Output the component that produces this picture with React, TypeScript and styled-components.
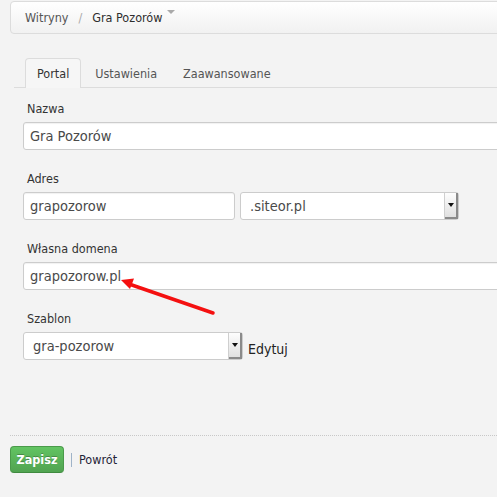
import React from "react";
import styled, { createGlobalStyle } from "styled-components";

const GlobalStyle = createGlobalStyle`
  html, body {
    margin: 0;
    padding: 0;
    background: #f3f3f3;
    overflow: hidden;
  }
  body {
    font-family: "DejaVu Sans Condensed", "DejaVu Sans", sans-serif;
    font-stretch: condensed;
  }
`;

const Page = styled.div`
  position: relative;
  width: 100%;
  height: 100vh;
  overflow: hidden;
  padding: 1px 0 0 10px;
  box-sizing: border-box;
`;

const Breadcrumb = styled.nav`
  display: flex;
  align-items: center;
  height: 33px;
  box-sizing: border-box;
  margin-right: -12px;
  padding-left: 14px;
  border: 1px solid #dcdcdc;
  border-radius: 4px;
  background: linear-gradient(#ffffff, #f1f1f1);
  font-size: 12.5px;
`;

const Crumb = styled.span<{ $current?: boolean }>`
  color: ${(p) => (p.$current ? "#2e2e2e" : "#555")};
`;

const Divider = styled.span`
  color: #aaa;
  margin: 0 10px;
`;

const Caret = styled.span`
  align-self: flex-start;
  margin: 8px 0 0 5px;
  width: 0;
  height: 0;
  border-top: 4px solid #aaa;
  border-left: 4px solid transparent;
  border-right: 4px solid transparent;
`;

const Main = styled.div`
  margin: 24px 0 0 4px;
`;

const Tabs = styled.ul`
  display: flex;
  list-style: none;
  margin: 0;
  padding: 0 0 0 11px;
  border-bottom: 1px solid #dcdcdc;
  height: 30px;
  box-sizing: border-box;
`;

const Tab = styled.li<{ $active?: boolean }>`
  padding: 0 11px;
  margin-right: 2px;
  line-height: 29px;
  height: 30px;
  box-sizing: border-box;
  font-size: 12.5px;
  border: 1px solid ${(p) => (p.$active ? "#dcdcdc" : "transparent")};
  border-bottom: none;
  border-radius: 4px 4px 0 0;
  background: ${(p) => (p.$active ? "#f6f6f6" : "transparent")};
  color: ${(p) => (p.$active ? "#333" : "#555")};
`;

const Fields = styled.div`
  padding: 12px 0 0 9px;
`;

const Group = styled.div`
  margin-bottom: 20px;
`;

const Label = styled.label`
  display: block;
  padding-left: 4px;
  margin-bottom: 4px;
  line-height: 18px;
  font-size: 12.5px;
  color: #333;
`;

const Row = styled.div`
  display: flex;
  align-items: center;
  gap: 5px;
`;

const Input = styled.div<{ $width: number }>`
  flex: none;
  width: ${(p) => p.$width}px;
  height: 28px;
  box-sizing: border-box;
  padding: 0 6px;
  display: flex;
  align-items: center;
  background: #fff;
  border: 1px solid #ccc;
  border-radius: 3px;
  box-shadow: inset 0 1px 1px rgba(0, 0, 0, 0.06);
  font-size: 14.5px;
  color: #4a4a4a;
`;

const Select = styled.div<{ $width: number }>`
  flex: none;
  width: ${(p) => p.$width}px;
  height: 28px;
  box-sizing: border-box;
  display: flex;
  align-items: stretch;
  background: #fff;
  border: 1px solid #ccc;
  border-radius: 3px;
  font-size: 14.5px;
  color: #4a4a4a;
`;

const SelectValue = styled.span`
  flex: 1;
  display: flex;
  align-items: center;
  padding-left: 9px;
`;

const SelectButton = styled.span`
  width: 13px;
  display: flex;
  align-items: center;
  justify-content: center;
  background: linear-gradient(#fdfdfd, #dedede);
  border-left: 1px solid #cfcfcf;
  box-shadow: inset -2px -2px 0 #8a8a8a;
  &::after {
    content: "";
    margin: -2px 2px 0 0;
    border-top: 4px solid #111;
    border-left: 3px solid transparent;
    border-right: 3px solid transparent;
  }
`;

const EditLink = styled.span`
  font-size: 14px;
  color: #222;
  margin-top: 6px;
`;

const Actions = styled.div`
  display: flex;
  align-items: center;
  margin-top: 75px;
  padding-top: 10px;
  border-top: 1px dotted #c8c8c8;
`;

const SaveButton = styled.button`
  width: 54px;
  height: 27px;
  padding: 0;
  border: 1px solid #4a9a4a;
  border-bottom-color: #3f8a3f;
  border-radius: 4px;
  background: linear-gradient(#62c462, #51a351);
  color: #fff;
  font-family: inherit;
  font-stretch: condensed;
  font-size: 12.5px;
  font-weight: bold;
  text-shadow: 0 -1px 0 rgba(0, 0, 0, 0.25);
`;

const Separator = styled.span`
  width: 1px;
  height: 14px;
  margin: 0 7px;
  background: #9fb3c8;
`;

const BackLink = styled.span`
  font-size: 12.5px;
  color: #1f2438;
`;

const Pointer = styled.svg`
  position: absolute;
  left: 0;
  top: 0;
  pointer-events: none;
`;

export default function App() {
  return (
    <>
      <GlobalStyle />
      <Page>
        <Breadcrumb>
          <Crumb>Witryny</Crumb>
          <Divider>/</Divider>
          <Crumb $current>Gra Pozorów</Crumb>
          <Caret />
        </Breadcrumb>

        <Main>
          <Tabs>
            <Tab $active>Portal</Tab>
            <Tab>Ustawienia</Tab>
            <Tab>Zaawansowane</Tab>
          </Tabs>

          <Fields>
            <Group>
              <Label>Nazwa</Label>
              <Input $width={600}>Gra Pozorów</Input>
            </Group>

            <Group>
              <Label>Adres</Label>
              <Row>
                <Input $width={212}>grapozorow</Input>
                <Select $width={219}>
                  <SelectValue>.siteor.pl</SelectValue>
                  <SelectButton />
                </Select>
              </Row>
            </Group>

            <Group>
              <Label>Własna domena</Label>
              <Input $width={600}>grapozorow.pl</Input>
            </Group>

            <Group>
              <Label>Szablon</Label>
              <Row>
                <Select $width={220}>
                  <SelectValue>gra-pozorow</SelectValue>
                  <SelectButton />
                </Select>
                <EditLink>Edytuj</EditLink>
              </Row>
            </Group>
          </Fields>
        </Main>

        <Actions>
          <SaveButton>Zapisz</SaveButton>
          <Separator />
          <BackLink>Powrót</BackLink>
        </Actions>

        <Pointer width="497" height="497" viewBox="0 0 497 497">
          <line x1="213" y1="313" x2="129" y2="284" stroke="#f41010" strokeWidth="3.5" strokeLinecap="round" />
          <polygon points="121,280 134,278.5 130,289" fill="#f41010" />
        </Pointer>
      </Page>
    </>
  );
}
